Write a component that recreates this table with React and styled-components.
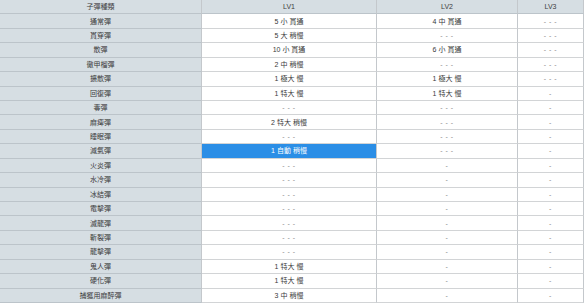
import React from 'react';
import styled, { createGlobalStyle } from 'styled-components';

const GlobalStyle = createGlobalStyle`
  html, body {
    margin: 0;
    padding: 0;
    background: #ffffff;
    overflow: hidden;
  }
  body {
    font-family: "Liberation Sans", "Noto Sans CJK TC", sans-serif;
  }
`;

const rows = [
  ['通常彈', '5 小 貫通', '4 中 貫通', '- - -'],
  ['貫穿彈', '5 大 稍慢', '- - -', '- - -'],
  ['散彈', '10 小 貫通', '6 小 貫通', '- - -'],
  ['徹甲榴彈', '2 中 稍慢', '- - -', '- - -'],
  ['擴散彈', '1 極大 慢', '1 極大 慢', '- - -'],
  ['回復彈', '1 特大 慢', '1 特大 慢', '-'],
  ['毒彈', '- - -', '- - -', '-'],
  ['麻痺彈', '2 特大 稍慢', '- - -', '-'],
  ['睡眠彈', '- - -', '- - -', '-'],
  ['減氣彈', '1 自動 稍慢', '- - -', '-', true],
  ['火炎彈', '- - -', '-', '-'],
  ['水冷彈', '- - -', '-', '-'],
  ['冰結彈', '- - -', '-', '-'],
  ['電擊彈', '- - -', '-', '-'],
  ['滅龍彈', '- - -', '-', '-'],
  ['斬裂彈', '- - -', '-', '-'],
  ['龍擊彈', '- - -', '-', '-'],
  ['鬼人彈', '1 特大 慢', '-', '-'],
  ['硬化彈', '1 特大 慢', '-', '-'],
  ['捕獲用麻醉彈', '3 中 稍慢', '-', '-'],
];

const Table = styled.div`
  display: grid;
  grid-template-columns: 202px 175px 141px 1fr;
  grid-template-rows: repeat(21, 1fr);
  width: 584px;
  height: 303px;
`;

const Cell = styled.div`
  display: flex;
  align-items: center;
  justify-content: center;
  font-size: 7px;
  line-height: 1;
  white-space: nowrap;
  box-sizing: border-box;
  border-bottom: 1px solid ${({ $label }) => ($label ? '#bcc4ca' : '#d2d4d6')};
  border-right: 1px solid #c4c8cc;
  background: ${({ $label, $active }) =>
    $active ? '#2b8ee6' : $label ? '#d6dee3' : '#ffffff'};
  color: ${({ $active, $empty }) =>
    $active ? '#ffffff' : $empty ? '#8a8a8a' : '#3a3a3a'};
  letter-spacing: ${({ $empty }) => ($empty ? '0.5px' : '0')};
`;

const HeadCell = styled(Cell)`
  background: #d6dee3;
  color: #404040;
  border-bottom: 1px solid #bcc4ca;
`;

export default function App() {
  return (
    <>
      <GlobalStyle />
      <Table>
        <HeadCell $label>子彈種類</HeadCell>
        <HeadCell>LV1</HeadCell>
        <HeadCell>LV2</HeadCell>
        <HeadCell>LV3</HeadCell>
        {rows.map(([name, a, b, c, active]) => (
          <React.Fragment key={name}>
            <Cell $label>{name}</Cell>
            <Cell $active={active} $empty={a.startsWith('-')}>{a}</Cell>
            <Cell $empty={b.startsWith('-')}>{b}</Cell>
            <Cell $empty={c.startsWith('-')}>{c}</Cell>
          </React.Fragment>
        ))}
      </Table>
    </>
  );
}
